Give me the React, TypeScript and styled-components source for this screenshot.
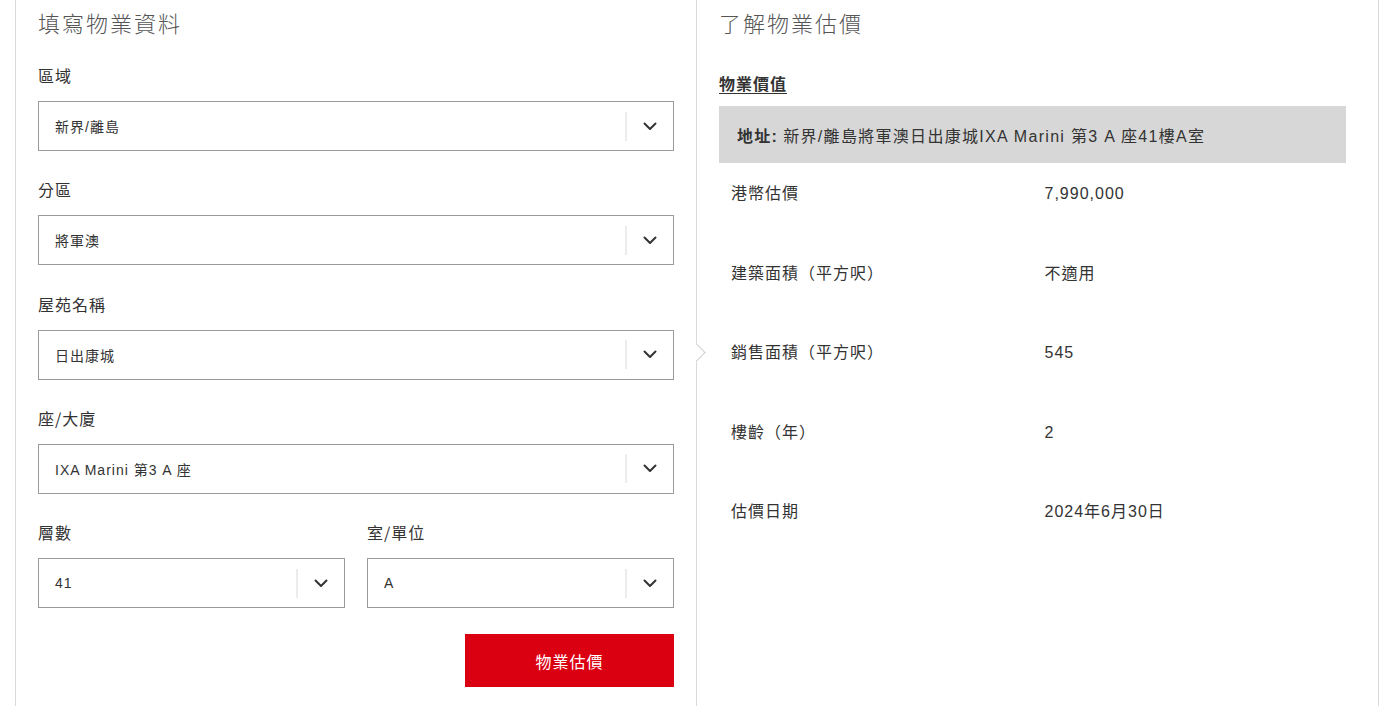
import React from "react";
import styled, { createGlobalStyle } from "styled-components";

const GlobalStyle = createGlobalStyle`
  html, body { margin: 0; padding: 0; background: #fff; }
  body {
    font-family: "Liberation Sans", Arial, "Noto Sans CJK TC", sans-serif;
    color: #333;
    letter-spacing: 1px;
  }
`;

const Card = styled.div`
  margin-left: 15px;
  width: 1362px;
  min-height: 720px;
  border-left: 1px solid #d9d9d9;
  border-right: 1px solid #d9d9d9;
  display: grid;
  grid-template-columns: 680px 1fr;
`;

const LeftCol = styled.div`
  padding: 7px 22px 0 22px;
  display: flex;
  flex-direction: column;
`;

const RightCol = styled.div`
  position: relative;
  border-left: 1px solid #d9d9d9;
  padding: 7px 32px 0 22px;
  display: flex;
  flex-direction: column;
`;

const Pointer = styled.span`
  position: absolute;
  left: -7px;
  top: 346px;
  width: 12px;
  height: 12px;
  background: #fff;
  border-top: 1px solid #d0d0d0;
  border-right: 1px solid #d0d0d0;
  transform: rotate(45deg);
`;

const Title = styled.h2`
  margin: 0;
  font-family: "Noto Sans CJK TC", sans-serif;
  font-weight: 300;
  font-size: 22px;
  line-height: 30px;
  color: #555;
  letter-spacing: 2px;
`;

const Form = styled.div`
  margin-top: 26px;
  display: flex;
  flex-direction: column;
  gap: 26.3px;
`;

const Field = styled.div`
  display: flex;
  flex-direction: column;
  flex: 1;
  min-width: 0;
`;

const Label = styled.label`
  font-family: "Noto Sans CJK TC", sans-serif;
  font-size: 16px;
  line-height: 24px;
  color: #333;
  margin-bottom: 14px;
`;

const SelectBox = styled.div`
  height: 50px;
  box-sizing: border-box;
  border: 1px solid #9a9a9a;
  background: #fff;
  display: flex;
  align-items: center;
`;

const SelectValue = styled.span`
  flex: 1;
  padding-left: 16px;
  font-size: 14px;
  color: #333;
  white-space: nowrap;
`;

const Toggle = styled.span`
  width: 48px;
  height: 29px;
  border-left: 2px solid #ececec;
  display: flex;
  align-items: center;
  justify-content: center;
  box-sizing: border-box;
`;

const Row = styled.div`
  display: flex;
  gap: 22px;
`;

const Actions = styled.div`
  display: flex;
  justify-content: flex-end;
`;

const SubmitButton = styled.button`
  width: 209px;
  height: 53px;
  border: none;
  background: #db0011;
  color: #fff;
  font-family: "Noto Sans CJK TC", sans-serif;
  font-size: 16px;
  letter-spacing: 1px;
  cursor: pointer;
`;

const SectionHeading = styled.h3`
  margin: 34px 0 0 0;
  font-family: "Noto Sans CJK TC", sans-serif;
  font-size: 16px;
  line-height: 24px;
  font-weight: 700;
  color: #333;
  text-decoration: underline;
  text-underline-offset: 3px;
`;

const AddressBar = styled.div`
  margin-top: 11px;
  height: 57px;
  background: #d7d7d7;
  display: flex;
  align-items: center;
  padding: 0 18px;
  font-size: 16px;
  letter-spacing: 1.3px;
  color: #333;
`;

const Strong = styled.strong`
  font-weight: 700;
  margin-right: 5px;
`;

const InfoRow = styled.div`
  display: grid;
  grid-template-columns: 1fr 1fr;
  padding: 19px 0 36.5px;
  font-size: 16px;
  line-height: 24px;
  color: #333;
`;

const Cell = styled.div`
  padding-left: 12px;
`;

const Chevron = () => (
  <svg width="14" height="9" viewBox="0 0 14 9" fill="none">
    <path d="M1.5 1.5 L7 7 L12.5 1.5" stroke="#333" strokeWidth="2" strokeLinecap="round" strokeLinejoin="round" />
  </svg>
);

const Select = ({ value }: { value: string }) => (
  <SelectBox>
    <SelectValue>{value}</SelectValue>
    <Toggle>
      <Chevron />
    </Toggle>
  </SelectBox>
);

const info: [string, string][] = [
  ["港幣估價", "7,990,000"],
  ["建築面積（平方呎）", "不適用"],
  ["銷售面積（平方呎）", "545"],
  ["樓齡（年）", "2"],
  ["估價日期", "2024年6月30日"],
];

export default function App() {
  return (
    <>
      <GlobalStyle />
      <Card>
        <LeftCol>
          <Title>填寫物業資料</Title>
          <Form>
            <Field>
              <Label>區域</Label>
              <Select value="新界/離島" />
            </Field>
            <Field>
              <Label>分區</Label>
              <Select value="將軍澳" />
            </Field>
            <Field>
              <Label>屋苑名稱</Label>
              <Select value="日出康城" />
            </Field>
            <Field>
              <Label>座/大廈</Label>
              <Select value="IXA Marini 第3 A 座" />
            </Field>
            <Row>
              <Field>
                <Label>層數</Label>
                <Select value="41" />
              </Field>
              <Field>
                <Label>室/單位</Label>
                <Select value="A" />
              </Field>
            </Row>
            <Actions>
              <SubmitButton>物業估價</SubmitButton>
            </Actions>
          </Form>
        </LeftCol>
        <RightCol>
          <Pointer />
          <Title>了解物業估價</Title>
          <SectionHeading>物業價值</SectionHeading>
          <AddressBar>
            <Strong>地址:</Strong>
            新界/離島將軍澳日出康城IXA Marini 第3 A 座41樓A室
          </AddressBar>
          {info.map(([k, v]) => (
            <InfoRow key={k}>
              <Cell>{k}</Cell>
              <Cell>{v}</Cell>
            </InfoRow>
          ))}
        </RightCol>
      </Card>
    </>
  );
}
